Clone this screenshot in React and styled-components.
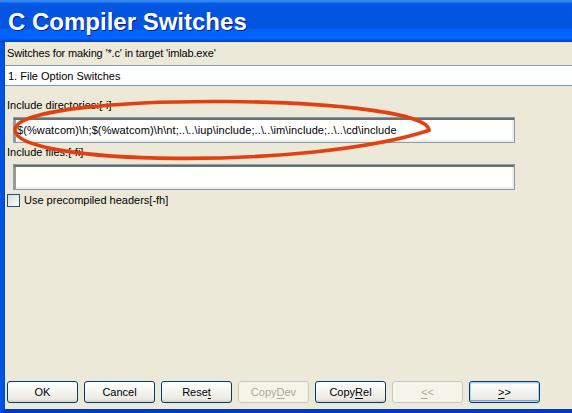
import styled, { createGlobalStyle } from "styled-components";

const GlobalStyle = createGlobalStyle`
	html, body {
		margin: 0;
		padding: 0;
		overflow: hidden;
		background: #ece9d8;
	}
`;

const buttons = [
	{ label: "OK" },
	{ label: "Cancel" },
	{ label: "Rese", key: "t", after: "" },
	{ label: "Copy", key: "D", after: "ev", disabled: true },
	{ label: "Copy", key: "R", after: "el" },
	{ label: "", key: "<", after: "<", disabled: true },
	{ label: "", key: ">", after: ">", isDefault: true },
];

export default function App() {
	return (
		<>
			<GlobalStyle />
			<Window>
				<TitleBar>C Compiler Switches</TitleBar>
				<Frame>
					<Caption>Switches for making '*.c' in target 'imlab.exe'</Caption>
					<Section>1. File Option Switches</Section>
					<Fields>
						<Label>Include directories:[-i]</Label>
						<Input>
							$(%watcom)\h;$(%watcom)\h\nt;..\..\iup\include;..\..\im\include;..\..\cd\include
						</Input>
						<Label>Include files:[-fi]</Label>
						<Input />
						<Check>
							<Box />
							Use precompiled headers[-fh]
						</Check>
					</Fields>
					<ButtonRow>
						{buttons.map((b, i) => (
							<Button key={i} disabled={b.disabled} $default={b.isDefault}>
								{b.label}
								{b.key && <u>{b.key}</u>}
								{b.after}
							</Button>
						))}
					</ButtonRow>
					<Marker viewBox="0 0 572 413" width="572" height="413">
						<path
							d="M 429 131 C 433 94, 22 90, 15 129 C 11 166, 310 170, 430 130"
							fill="none"
							stroke="#e2410f"
							strokeWidth="3.6"
						/>
					</Marker>
				</Frame>
			</Window>
		</>
	);
}

const Window = styled.div`
	width: 572px;
	height: 413px;
	display: flex;
	flex-direction: column;
	position: relative;
	font-family: "Liberation Sans", Arial, sans-serif;
`;

const TitleBar = styled.div`
	height: 42px;
	box-sizing: border-box;
	padding: 8px 0 0 8px;
	color: #fff;
	font-family: "Liberation Sans", Arial, sans-serif;
	font-weight: bold;
	font-size: 24px;
	line-height: 28px;
	text-shadow: 1px 1px #0a1f8a;
	background: linear-gradient(
		to bottom,
		#3a8cf4 0px,
		#2a7ef2 2px,
		#0a5fe8 3px,
		#0256e0 6px,
		#0054e0 28px,
		#0064fb 30px,
		#0066ff 38px,
		#004de6 40px,
		#0040d0 42px
	);
`;

const Frame = styled.div`
	flex: 1;
	display: flex;
	flex-direction: column;
	background: #ece9d8;
	border-left: 4px solid #0052e0;
	border-bottom: 4px solid #0038c8;
	box-shadow: inset 1px 0 #0048d0;
	font-size: 11px;
	color: #000;
`;

const Caption = styled.div`
	padding: 4px 0 0 3px;
	height: 19px;
	box-sizing: border-box;
	line-height: 14px;
	letter-spacing: -0.15px;
`;

const Section = styled.div`
	margin: 4px 0 0 1px;
	height: 21px;
	box-sizing: border-box;
	background: #fff;
	border-top: 1px solid #7f9db9;
	border-bottom: 1px solid #7f9db9;
	padding: 3px 0 0 3px;
	line-height: 14px;
`;

const Fields = styled.div`
	display: flex;
	flex-direction: column;
	padding: 12px 0 0 3px;
	flex: 1;
`;

const Label = styled.div`
	height: 14px;
	line-height: 14px;
`;

const Input = styled.div`
	margin: 5px 0 2px 6px;
	width: 502px;
	height: 26px;
	box-sizing: border-box;
	background: #fff;
	border: 1px solid #7f9db9;
	box-shadow: inset 0 2px #716f64, inset 2px 0 #9d9a8e, inset 0 -2px #f1efe2, inset -2px 0 #f1efe2;
	padding: 6px 0 0 3px;
	line-height: 13px;
	font-size: 11px;
	letter-spacing: 0.1px;
	white-space: nowrap;
	color: #000;
`;

const Check = styled.div`
	display: flex;
	align-items: center;
	gap: 4px;
	margin-top: 1px;
	height: 14px;
`;

const Box = styled.span`
	width: 11px;
	height: 11px;
	border: 1px solid #1c5180;
	background: linear-gradient(135deg, #dcdcd7, #ffffff);
`;

const ButtonRow = styled.div`
	display: flex;
	gap: 6px;
	padding: 0 0 6px 3px;
`;

const Button = styled.div`
	width: 71px;
	height: 22px;
	box-sizing: border-box;
	display: flex;
	align-items: center;
	justify-content: center;
	border: 1px solid ${({ disabled }) => (disabled ? "#c9c7ba" : "#003c74")};
	border-radius: 3px;
	color: ${({ disabled }) => (disabled ? "#aca899" : "#000")};
	background: ${({ disabled }) =>
		disabled
			? "#f5f4ea"
			: "linear-gradient(to bottom, #ffffff 0%, #f6f6f2 40%, #eceae3 85%, #d6d0c5 100%)"};
	box-shadow: ${({ $default }) =>
		$default ? "inset 0 0 0 1px #b5cff4, inset 0 -2px #7da2ce, inset 0 2px #cee7ff" : "none"};
	font-size: 11px;

	u {
		text-decoration-thickness: 1px;
		text-underline-offset: 2px;
	}
`;

const Marker = styled.svg`
	position: absolute;
	left: 0;
	top: 0;
	pointer-events: none;
`;
